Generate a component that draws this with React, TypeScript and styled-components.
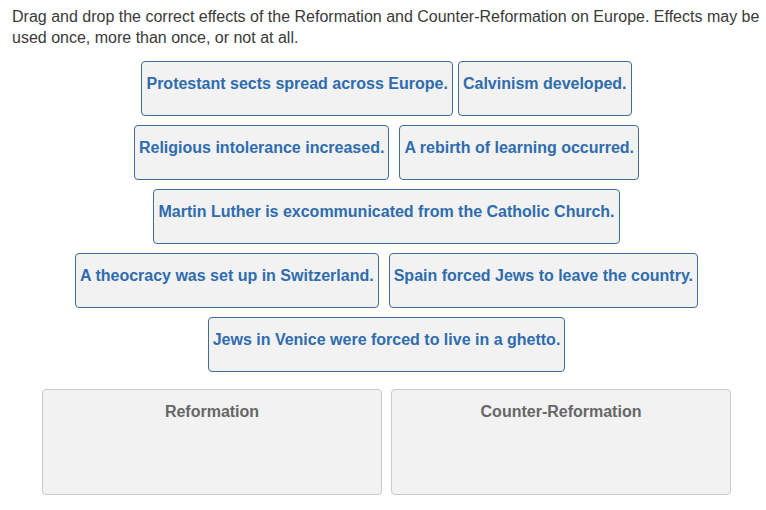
import React from 'react';
import styled, { createGlobalStyle } from 'styled-components';

const GlobalStyle = createGlobalStyle`
  body {
    margin: 0;
    background: #ffffff;
    font-family: "Liberation Sans", Arial, sans-serif;
  }
`;

const Page = styled.div`
  width: 749px;
  padding: 6px 0 0 12px;
`;

const Prompt = styled.p`
  margin: 0 0 13px 0;
  font-size: 16px;
  line-height: 21px;
  color: #3a3a3a;
`;

const TileArea = styled.div`
  display: flex;
  flex-direction: column;
  gap: 9px;
`;

const TileRow = styled.div<{ $gap: number }>`
  display: flex;
  justify-content: center;
  gap: ${props => props.$gap}px;
`;

const Tile = styled.div`
  box-sizing: border-box;
  height: 55px;
  padding: 12px 4px 0 4px;
  background: #f2f2f2;
  border: 1px solid #3f6d96;
  border-radius: 4px;
  font-size: 16px;
  font-weight: bold;
  line-height: 20px;
  color: #2f6cad;
  white-space: nowrap;
`;

const ZoneArea = styled.div`
  display: flex;
  justify-content: center;
  gap: 9px;
  margin-top: 17px;
`;

const Zone = styled.div`
  box-sizing: border-box;
  width: 340px;
  height: 106px;
  padding-top: 12px;
  background: #f2f2f2;
  border: 1px solid #cacaca;
  border-radius: 4px;
  text-align: center;
  font-size: 16px;
  font-weight: bold;
  line-height: 20px;
  color: #666666;
`;

const rows: { gap: number; items: string[] }[] = [
  { gap: 5, items: ['Protestant sects spread across Europe.', 'Calvinism developed.'] },
  { gap: 10, items: ['Religious intolerance increased.', 'A rebirth of learning occurred.'] },
  { gap: 10, items: ['Martin Luther is excommunicated from the Catholic Church.'] },
  { gap: 10, items: ['A theocracy was set up in Switzerland.', 'Spain forced Jews to leave the country.'] },
  { gap: 10, items: ['Jews in Venice were forced to live in a ghetto.'] },
];

const zones = ['Reformation', 'Counter-Reformation'];

const App: React.FC = () => {
  return (
    <Page>
      <GlobalStyle />
      <Prompt>
        Drag and drop the correct effects of the Reformation and Counter-Reformation on Europe. Effects may be
        used once, more than once, or not at all.
      </Prompt>

      <TileArea>
        {rows.map((row, index) => (
          <TileRow key={index} $gap={row.gap}>
            {row.items.map(item => (
              <Tile key={item}>{item}</Tile>
            ))}
          </TileRow>
        ))}
      </TileArea>

      <ZoneArea>
        {zones.map(zone => (
          <Zone key={zone}>{zone}</Zone>
        ))}
      </ZoneArea>
    </Page>
  );
};

export default App;
